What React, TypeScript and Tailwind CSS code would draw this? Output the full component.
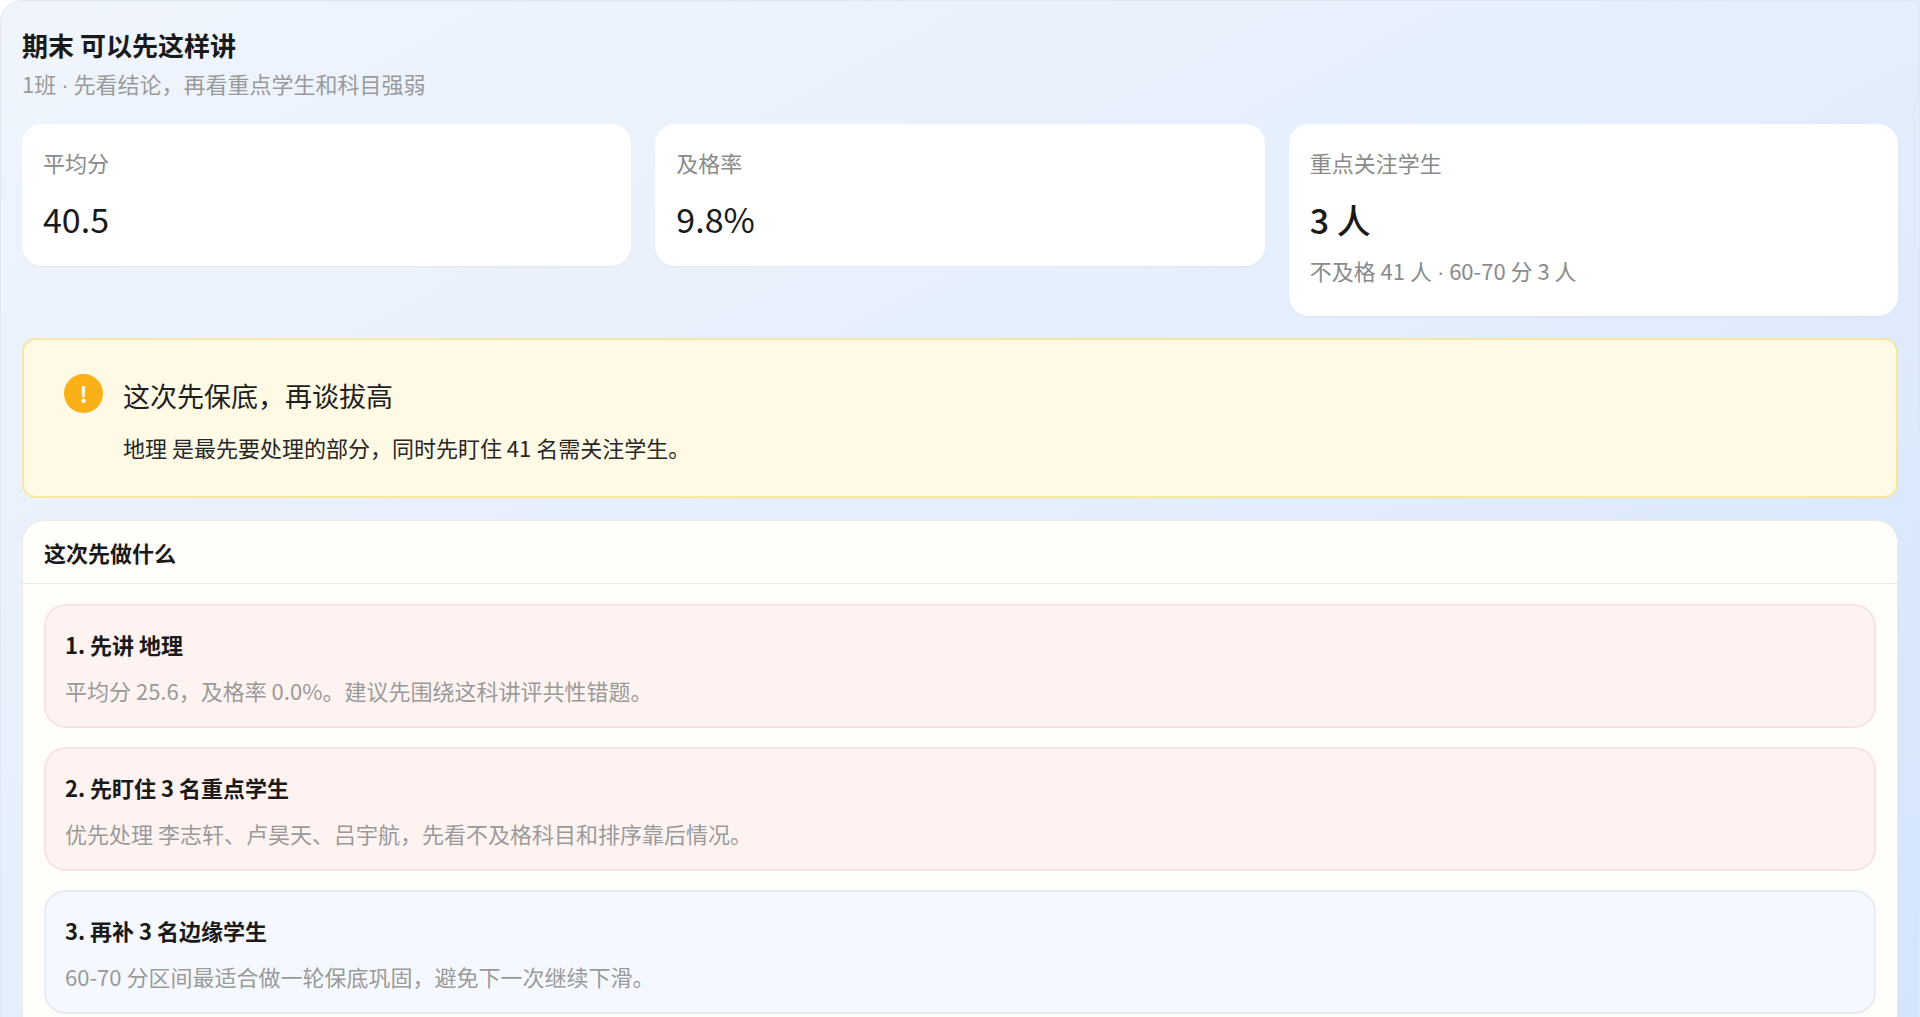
export default function App() {
  const items = [
    { t: "1. 先讲 地理", d: "平均分 25.6，及格率 0.0%。建议先围绕这科讲评共性错题。", red: true },
    { t: "2. 先盯住 3 名重点学生", d: "优先处理 李志轩、卢昊天、吕宇航，先看不及格科目和排序靠后情况。", red: true },
    { t: "3. 再补 3 名边缘学生", d: "60-70 分区间最适合做一轮保底巩固，避免下一次继续下滑。", red: false },
  ];
  const dot = <span style={{ fontFamily: '"Liberation Sans", sans-serif' }}>·</span>;
  return (
    <div className="h-[1017px] w-[1920px] overflow-hidden bg-white" style={{ fontFamily: '"Noto Sans CJK SC", "Noto Sans", sans-serif' }}>
      <div className="h-[1040px] rounded-tl-[22px] border border-[#dfe7f3] bg-gradient-to-br from-[#f0f5fd] via-[#e4eefc] to-[#d3e4fc] px-[21px] pt-[26px]">
        <div className="text-[26px] font-bold leading-[36px] text-[#1a1a1a]">期末 可以先这样讲</div>
        <div className="mt-[4px] text-[22px] leading-[32px] text-[#9a9a9a]">1班 {dot} 先看结论，再看重点学生和科目强弱</div>
        <div className="mt-[22px] grid grid-cols-3 items-start gap-[24px]">
          <div className="h-[142px] rounded-[20px] bg-white px-[21px] pt-[22px] shadow-[0_1px_2px_rgba(0,0,0,0.04)]">
            <div className="text-[22px] leading-[32px] text-[#8a8a8a]">平均分</div>
            <div className="mt-[20px] text-[34px] leading-[42px] text-[#1a1a1a]">40.5</div>
          </div>
          <div className="h-[142px] rounded-[20px] bg-white px-[21px] pt-[22px] shadow-[0_1px_2px_rgba(0,0,0,0.04)]">
            <div className="text-[22px] leading-[32px] text-[#8a8a8a]">及格率</div>
            <div className="mt-[20px] text-[34px] leading-[42px] text-[#1a1a1a]">9.8%</div>
          </div>
          <div className="h-[192px] rounded-[20px] bg-white px-[21px] pt-[22px] shadow-[0_1px_2px_rgba(0,0,0,0.04)]">
            <div className="text-[22px] leading-[32px] text-[#8a8a8a]">重点关注学生</div>
            <div className="mt-[20px] text-[34px] font-medium leading-[44px] text-[#1a1a1a]">3 人</div>
            <div className="mt-[12px] text-[22px] leading-[32px] text-[#8a8a8a]">不及格 41 人 {dot} 60-70 分 3 人</div>
          </div>
        </div>
        <div className="mt-[22px] flex h-[160px] gap-[20px] rounded-[14px] border-2 border-[#f8e7a0] bg-[#fffae6] px-[40px] pt-[34px]">
          <div className="flex h-[39px] w-[39px] shrink-0 items-center justify-center rounded-full bg-[#fbb018] text-[22px] font-bold text-white">!</div>
          <div>
            <div className="mt-[3px] text-[27px] leading-[38px] text-[#1f1f1f]">这次先保底，再谈拔高</div>
            <div className="mt-[16px] text-[22px] leading-[32px] text-[#262626]">地理 是最先要处理的部分，同时先盯住 41 名需关注学生。</div>
          </div>
        </div>
        <div className="mt-[22px] rounded-[22px] border border-[#eceae4] bg-[#fffefb]">
          <div className="flex h-[63px] items-center border-b border-[#ece9e4] px-[21px] text-[22px] font-bold text-[#1a1a1a]">这次先做什么</div>
          <div className="flex flex-col gap-[19px] px-[21px] pb-[20px] pt-[20px]">
            {items.map((it) => (
              <div key={it.t} className={`h-[124px] rounded-[22px] border-2 px-[19px] pt-[22px] ${it.red ? "border-[#f6e3e3] bg-[#fff3f2]" : "border-[#e6ebf2] bg-[#f5f9ff]"}`}>
                <div className="text-[22px] font-bold leading-[32px] text-[#1a1a1a]">{it.t}</div>
                <div className="mt-[14px] text-[22px] leading-[32px] text-[#9a9a9a]">{it.d}</div>
              </div>
            ))}
          </div>
        </div>
      </div>
    </div>
  );
}
